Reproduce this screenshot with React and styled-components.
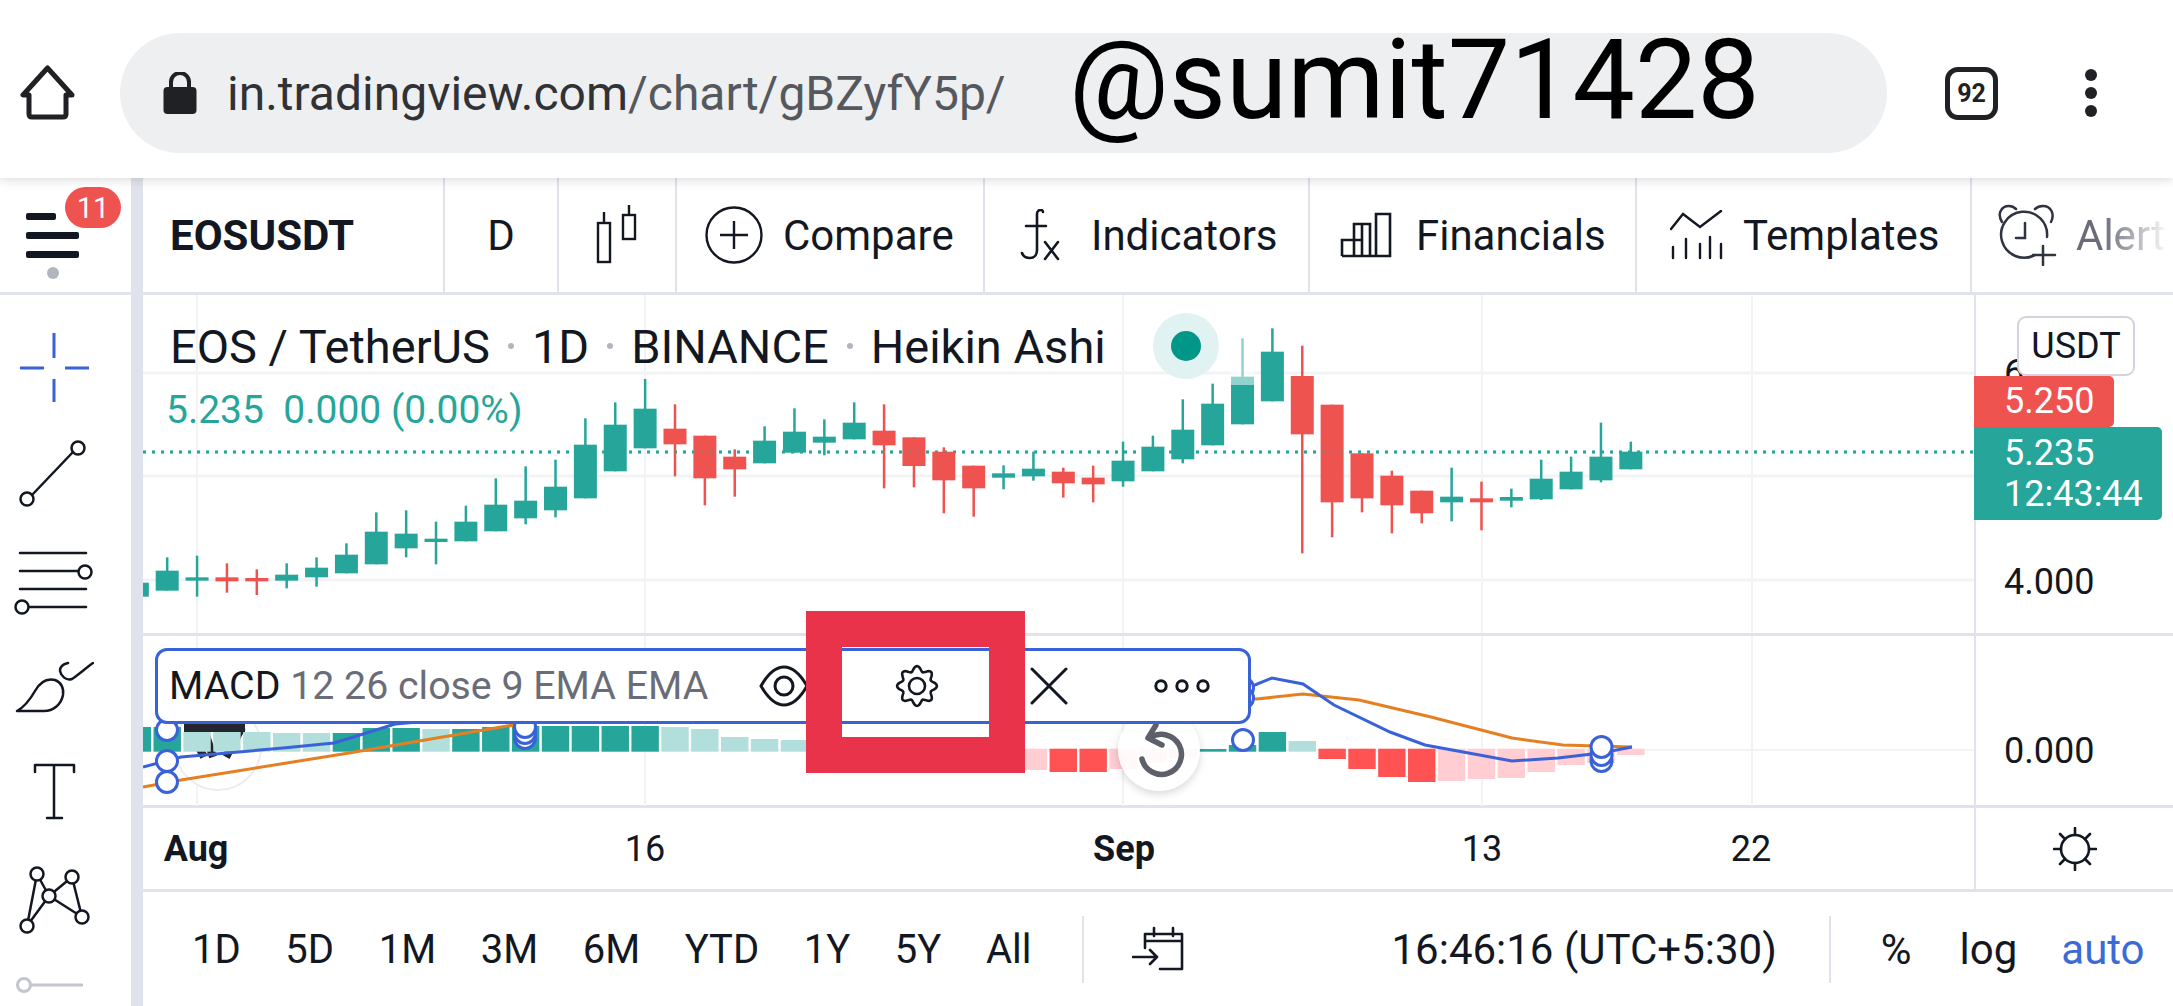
import React from 'react';
import styled, { createGlobalStyle } from 'styled-components';

const INK = '#131722';
const GREEN = '#26a69a';
const RED = '#ef5350';
const LINE = '#e0e3eb';
const GRID = '#f2f3f5';
const BLUE = '#3a62d8';

const GlobalStyle = createGlobalStyle`
  html, body { margin: 0; padding: 0; background: #fff; }
  body { font-family: Roboto, "Liberation Sans", sans-serif; color: ${INK}; overflow: hidden; }
`;

// wick top, body top, body bottom, wick bottom (read off the chart), colour
const candles = [
  [848, 848, 890, 890, 'g'], [772, 812, 872, 872, 'g'], [767, 832, 842, 890, 'g'], [790, 832, 844, 878, 'r'],
  [808, 834, 844, 885, 'r'], [790, 824, 842, 865, 'g'], [772, 803, 832, 860, 'g'], [730, 764, 820, 820, 'g'],
  [637, 695, 793, 793, 'g'], [631, 701, 745, 772, 'g'], [665, 716, 726, 793, 'g'], [617, 665, 724, 724, 'g'],
  [535, 614, 694, 694, 'g'], [499, 602, 655, 673, 'g'], [479, 560, 631, 652, 'g'], [355, 434, 595, 595, 'g'],
  [307, 374, 514, 514, 'g'], [237, 326, 445, 445, 'g'], [313, 386, 433, 529, 'r'], [407, 407, 535, 616, 'r'],
  [448, 470, 508, 590, 'r'], [379, 422, 490, 490, 'g'], [325, 395, 458, 458, 'g'], [358, 410, 428, 466, 'g'],
  [307, 368, 418, 418, 'g'], [313, 392, 436, 565, 'r'], [412, 412, 498, 562, 'r'], [442, 455, 541, 640, 'r'],
  [497, 497, 565, 650, 'r'], [496, 520, 533, 568, 'g'], [455, 506, 529, 542, 'g'], [503, 515, 550, 593, 'r'],
  [497, 533, 553, 607, 'r'], [425, 482, 544, 560, 'g'], [407, 440, 514, 514, 'g'], [298, 389, 478, 490, 'g'],
  [251, 311, 436, 436, 'g'], [115, 230, 373, 373, 'g'], [85, 155, 304, 304, 'g'], [137, 228, 403, 760, 'r'],
  [314, 314, 607, 712, 'r'], [460, 460, 595, 637, 'r'], [512, 527, 616, 700, 'r'], [572, 572, 640, 670, 'r'],
  [503, 590, 607, 664, 'g'], [545, 595, 607, 691, 'r'], [566, 591, 602, 622, 'g'], [479, 536, 598, 600, 'g'],
  [470, 515, 568, 568, 'g'], [368, 470, 541, 547, 'g'], [425, 455, 508, 508, 'g'],
];

const HIST_COLORS = { g: GREEN, l: '#b2dfdb', r: '#ff5252', p: '#ffcdd2' };
const ABOVE = [
  [-1, 727, 'g'], [0, 727, 'g'], [1, 732, 'l'], [2, 732, 'l'], [3, 732, 'l'], [4, 733, 'l'], [5, 733, 'l'], [6, 733, 'g'],
  [7, 728, 'g'], [8, 728, 'g'], [9, 729, 'l'], [10, 729, 'g'], [11, 727, 'g'], [12, 726, 'g'], [13, 726, 'g'],
  [14, 726, 'g'], [15, 726, 'g'], [16, 726, 'g'], [17, 727, 'l'], [18, 729, 'l'], [19, 737, 'l'], [20, 739, 'l'], [21, 740, 'l'],
  [35, 749, 'g'], [36, 745, 'g'], [37, 732, 'g'], [38, 741, 'l'],
];
const BELOW = [
  [29, 770, 'p'], [30, 772, 'r'], [31, 772, 'r'], [32, 769, 'p'], [33, 763, 'p'], [34, 758, 'p'], [39, 759, 'r'], [40, 769, 'r'],
  [41, 777, 'r'], [42, 782, 'r'], [43, 781, 'p'], [44, 779, 'p'], [45, 778, 'p'], [46, 772, 'p'], [47, 765, 'p'], [48, 763, 'p'], [49, 755, 'p'],
];

const GRID_X = [197, 645, 1123, 1482, 1752];
const TIME_TICKS = [
  { label: 'Aug', x: 196, bold: true }, { label: '16', x: 645 }, { label: 'Sep', x: 1124, bold: true },
  { label: '13', x: 1482 }, { label: '22', x: 1751 },
];
const RANGES = ['1D', '5D', '1M', '3M', '6M', 'YTD', '1Y', '5Y', 'All'];

const candleX = (i) => 167.2 + 29.87 * i;
const zy = (v) => 300 + v / 3;

const Page = styled.div`
  position: relative;
  width: 2173px;
  height: 1006px;
  overflow: hidden;
  background: #fff;
`;

/* browser chrome */
const BrowserBar = styled.header`
  position: relative;
  z-index: 3;
  height: 178px;
  box-sizing: border-box;
  padding-top: 8px;
  display: flex;
  align-items: center;
  background: #fff;
  box-shadow: 0 2px 10px rgba(0, 0, 0, 0.14);
`;
const HomeBtn = styled.div`
  width: 120px;
  padding-left: 20px;
  box-sizing: border-box;
  display: flex;
`;
const UrlPill = styled.div`
  width: 1767px;
  height: 120px;
  border-radius: 60px;
  background: #eeeff1;
  display: flex;
  align-items: center;
  padding-left: 43px;
  box-sizing: border-box;
  font-size: 48px;
  white-space: nowrap;
`;
const Domain = styled.span`
  color: #303236;
  margin-left: 30px;
`;
const UrlPath = styled.span`
  color: #55585d;
`;
const Watermark = styled.div`
  position: absolute;
  left: 1069px;
  top: 15px;
  font-size: 111px;
  line-height: 130px;
  color: #000;
`;
const TabCount = styled.div`
  width: 53px;
  height: 53px;
  margin-left: 58px;
  border: 5px solid #202124;
  border-radius: 13px;
  box-sizing: border-box;
  display: flex;
  align-items: center;
  justify-content: center;
  font-size: 25px;
  font-weight: 700;
  color: #202124;
`;
const Kebab = styled.div`
  margin-left: 87px;
  display: flex;
  flex-direction: column;
  gap: 6px;
  & > i {
    width: 12px;
    height: 12px;
    border-radius: 50%;
    background: #202124;
  }
`;

/* app frame */
const Body = styled.div`
  display: flex;
  height: 828px;
`;
const LeftCol = styled.aside`
  width: 131px;
  flex: none;
`;
const Divider = styled.div`
  width: 12px;
  flex: none;
  background: ${LINE};
`;
const Main = styled.div`
  flex: 1;
  min-width: 0;
`;
const MenuCell = styled.div`
  position: relative;
  height: 114px;
  border-bottom: 3px solid ${LINE};
`;
const MenuBars = styled.div`
  position: absolute;
  left: 26px;
  top: 35px;
  display: flex;
  flex-direction: column;
  gap: 12px;
`;
const MenuBar = styled.div`
  width: ${(p) => p.$w}px;
  height: 7px;
  border-radius: 2px;
  background: ${INK};
`;
const Badge = styled.div`
  position: absolute;
  left: 65px;
  top: 9px;
  width: 56px;
  height: 41px;
  border-radius: 21px;
  background: ${RED};
  box-shadow: 0 0 0 1px #fff;
  color: #fff;
  font-size: 29px;
  display: flex;
  align-items: center;
  justify-content: center;
`;
const MenuDot = styled.div`
  position: absolute;
  left: 47px;
  top: 89px;
  width: 12px;
  height: 12px;
  border-radius: 50%;
  background: #b2b5be;
`;
const ToolList = styled.div`
  padding: 20px 0 0 14px;
  display: flex;
  flex-direction: column;
`;
const ToolCell = styled.div`
  height: 106px;
  display: flex;
  align-items: center;
  flex: none;
`;

/* top toolbar */
const Toolbar = styled.nav`
  height: 114px;
  display: flex;
  border-bottom: 3px solid ${LINE};
  overflow: hidden;
`;
const ToolItem = styled.div`
  width: ${(p) => p.$w}px;
  flex: none;
  box-sizing: border-box;
  display: flex;
  align-items: center;
  justify-content: ${(p) => (p.$center ? 'center' : 'flex-start')};
  gap: ${(p) => p.$gap || 0}px;
  padding-left: ${(p) => p.$pad || 0}px;
  border-right: ${(p) => (p.$last ? 'none' : `2px solid ${LINE}`)};
  font-size: 42px;
  white-space: nowrap;
`;
const SymbolText = styled.span`
  font-size: 42px;
  font-weight: 700;
`;
const FadedText = styled.span`
  color: #6a6d78;
  -webkit-mask-image: linear-gradient(90deg, #000 30%, transparent 105%);
  mask-image: linear-gradient(90deg, #000 30%, transparent 105%);
`;

/* chart */
const ChartRow = styled.div`
  display: flex;
  height: ${(p) => p.$h}px;
  border-bottom: 3px solid ${LINE};
`;
const Pane = styled.div`
  position: relative;
  width: 1831px;
  flex: none;
`;
const Drawing = styled.svg`
  display: block;
`;
const PriceScale = styled.div`
  position: relative;
  flex: 1;
  border-left: 2px solid ${LINE};
`;
const ScaleText = styled.div`
  position: absolute;
  left: 28px;
  top: ${(p) => p.$y}px;
  transform: translateY(-50%);
  font-size: 36px;
  line-height: 44px;
`;
const CurrencyBox = styled.div`
  position: absolute;
  left: 41px;
  top: 21px;
  width: 118px;
  height: 60px;
  box-sizing: border-box;
  border: 2px solid #d1d4dc;
  border-radius: 9px;
  background: #fff;
  font-size: 36px;
  display: flex;
  align-items: center;
  justify-content: center;
`;
const PriceTag = styled.div`
  position: absolute;
  left: -2px;
  top: ${(p) => p.$top}px;
  width: ${(p) => p.$w}px;
  height: ${(p) => p.$h}px;
  box-sizing: border-box;
  padding-left: 30px;
  background: ${(p) => p.$bg};
  border-radius: 0 5px 5px 0;
  color: #fff;
  font-size: 36px;
  line-height: 41px;
  display: flex;
  flex-direction: column;
  justify-content: center;
`;
const TitleRow = styled.div`
  position: absolute;
  left: 27px;
  top: 18px;
  height: 66px;
  display: flex;
  align-items: center;
  gap: 18px;
  font-size: 47px;
  white-space: nowrap;
`;
const TitleDot = styled.i`
  width: 6px;
  height: 6px;
  border-radius: 50%;
  background: #b2b5be;
`;
const StatusHalo = styled.div`
  width: 66px;
  height: 66px;
  margin-left: 29px;
  border-radius: 50%;
  background: #e0f2f1;
  display: flex;
  align-items: center;
  justify-content: center;
  &::after {
    content: '';
    width: 30px;
    height: 30px;
    border-radius: 50%;
    background: #009688;
  }
`;
const ValueRow = styled.div`
  position: absolute;
  left: 23px;
  top: 91px;
  font-size: 39px;
  line-height: 48px;
  color: ${GREEN};
  white-space: pre;
`;
const IndicatorLegend = styled.div`
  position: absolute;
  left: 12px;
  top: 12px;
  width: 1096px;
  height: 76px;
  box-sizing: border-box;
  border: 3px solid ${BLUE};
  border-radius: 12px;
  background: #fff;
  display: flex;
  align-items: center;
  z-index: 2;
`;
const IndicatorText = styled.div`
  flex: 1;
  padding-left: 11px;
  font-size: 39.3px;
  white-space: nowrap;
  color: #6a6d78;
  & > b {
    font-weight: 400;
    color: ${INK};
  }
`;
const LegendSlot = styled.div`
  width: 132.5px;
  flex: none;
  display: flex;
  justify-content: center;
`;
const ResetBtn = styled.div`
  position: absolute;
  left: 975px;
  top: 73px;
  width: 82px;
  height: 82px;
  border-radius: 50%;
  background: rgba(255, 255, 255, 0.88);
  box-shadow: 0 3px 8px rgba(0, 0, 0, 0.16);
  display: flex;
  align-items: center;
  justify-content: center;
  z-index: 1;
`;
const TimeRow = styled.div`
  display: flex;
  height: 81px;
  border-bottom: 3px solid ${LINE};
`;
const TimeScale = styled.div`
  position: relative;
  width: 1831px;
  flex: none;
`;
const TimeTick = styled.div`
  position: absolute;
  left: ${(p) => p.$x}px;
  top: 50%;
  transform: translate(-50%, -50%);
  font-size: 36px;
  font-weight: ${(p) => (p.$bold ? 700 : 400)};
`;
const TimeCorner = styled.div`
  flex: 1;
  border-left: 2px solid ${LINE};
  display: flex;
  align-items: center;
  justify-content: center;
`;

/* bottom bar */
const BottomBar = styled.footer`
  height: 114px;
  display: flex;
  align-items: center;
  font-size: 40px;
  white-space: nowrap;
`;
const RangeGroup = styled.div`
  display: flex;
  gap: 44.6px;
  padding-left: 49px;
`;
const BarSep = styled.div`
  width: 2px;
  height: 67px;
  margin-left: ${(p) => p.$ml}px;
  background: ${LINE};
`;
const BarItem = styled.span`
  margin-left: ${(p) => p.$ml}px;
  font-size: 42px;
  color: ${(p) => p.$color || INK};
`;
const CalendarSlot = styled.div`
  margin-left: 48px;
  display: flex;
`;

const RedFrame = styled.div`
  position: absolute;
  left: 806px;
  top: 611px;
  width: 219px;
  height: 162px;
  box-sizing: border-box;
  border: 36px solid #e9334a;
  z-index: 4;
`;

/* icons */
const stroke = { fill: 'none', stroke: INK, strokeWidth: 2.5, strokeLinecap: 'round', strokeLinejoin: 'round' };

const HomeIcon = () => (
  <svg width="56" height="56" viewBox="0 0 56 56" fill="none" stroke="#202124" strokeWidth="5" strokeLinejoin="round">
    <path d="M27.5 3 L3 30 H9 V49 Q9 52 12 52 H43 Q46 52 46 49 V30 H52 Z" />
  </svg>
);
const LockIcon = () => (
  <svg width="34" height="42" viewBox="0 0 34 42">
    <rect x="0.5" y="15" width="33" height="27" rx="4" fill="#202124" />
    <path d="M8 17 V10 A9 9 0 0 1 26 10 V17" fill="none" stroke="#202124" strokeWidth="4" />
  </svg>
);
const CrosshairIcon = () => (
  <svg width="80" height="80" viewBox="0 0 80 80" stroke={BLUE} strokeWidth="3">
    <path d="M6 40 H30 M51 40 H75 M40 5 V30 M40 51 V74" fill="none" />
  </svg>
);
const TrendIcon = () => (
  <svg width="80" height="80" viewBox="0 0 80 80" {...stroke}>
    <path d="M18 61 L59 18" />
    <circle cx="13" cy="65" r="6.5" />
    <circle cx="64" cy="14" r="6.5" />
  </svg>
);
const FibIcon = () => (
  <svg width="80" height="80" viewBox="0 0 80 80" {...stroke}>
    <path d="M6 13 H72 M6 31 H64 M6 49 H72 M15 67 H72" />
    <circle cx="71" cy="32" r="6.5" />
    <circle cx="8" cy="67" r="6.5" />
  </svg>
);
const BrushIcon = () => (
  <svg width="80" height="80" viewBox="0 0 80 80" {...stroke}>
    <path d="M3 65 C12 60 17 52 21 45 C26 36 33 32 41 34 C47 36 50 42 49 49 C47 59 39 65 30 65 Z" />
    <path d="M54 17 C49 18 46 21 46 25 C47 30 52 35 58 33 C64 29 72 22 79 17" />
  </svg>
);
const TextIcon = () => (
  <svg width="80" height="80" viewBox="0 0 80 80" {...stroke}>
    <path d="M21 20 V13 H60 V20 M40 13 V66 M33 66 H48" />
  </svg>
);
const PatternIcon = () => (
  <svg width="80" height="80" viewBox="0 0 80 80" {...stroke}>
    <path d="M23 16 L13 68 M23 16 L35 38 M13 68 L35 38 M35 38 L58 19 M35 38 L68 59 M58 19 L68 59" />
    {[[23, 16], [58, 19], [35, 38], [68, 59], [13, 68]].map(([cx, cy]) => (
      <circle key={cx} cx={cx} cy={cy} r="6.5" fill="#fff" />
    ))}
  </svg>
);
const MeasureIcon = () => (
  <svg width="80" height="80" viewBox="0 0 80 80" fill="none" stroke="#c4c6cd" strokeWidth="3">
    <path d="M17 21 H69" />
    <circle cx="10" cy="21" r="6.5" />
  </svg>
);
const CandleIcon = () => (
  <svg width="44" height="62" viewBox="0 0 44 62" fill="none" stroke={INK} strokeWidth="2.4">
    <rect x="3" y="19" width="12" height="39" />
    <rect x="28" y="11" width="12" height="24" />
    <path d="M9 8 V19 M34 1 V11" />
  </svg>
);
const CompareIcon = () => (
  <svg width="58" height="58" viewBox="0 0 58 58" fill="none" stroke={INK} strokeWidth="2.4">
    <circle cx="29" cy="29" r="27.5" />
    <path d="M29 15 V43 M15 29 H43" />
  </svg>
);
const FxIcon = () => (
  <svg width="42" height="52" viewBox="0 0 42 52" fill="none" stroke={INK} strokeWidth="2.6" strokeLinecap="round">
    <path d="M19 5 C19 2 21 1 23 1 C24 1 25 2 25 3 M19 5 V41 C19 46 16 49 12 49 C8 49 5 47 4 44 M8 17 H28" />
    <path d="M27 33 L40 50 M40 33 L27 50" />
  </svg>
);
const BarsIcon = () => (
  <svg width="52" height="46" viewBox="0 0 52 46" fill="none" stroke={INK} strokeWidth="2.6">
    <path d="M2 44 H50 V2 H36 V44 M36 12 V44 M2 44 V28 H14 V44 M14 44 V12 H30 V44 M14 28 H22 M22 12 V44" />
  </svg>
);
const TemplatesIcon = () => (
  <svg width="54" height="50" viewBox="0 0 54 50" fill="none" stroke={INK} strokeWidth="2.4" strokeLinecap="round">
    <path d="M1 19 L13 4 L30 17 L51 1" />
    <path d="M3 48 V37 M16 48 V29 M30 48 V34 M40 48 V27 M51 48 V34" />
  </svg>
);
const AlertIcon = () => (
  <svg width="60" height="62" viewBox="0 0 60 62" fill="none" stroke="#303340" strokeWidth="2.5" strokeLinecap="round">
    <path d="M38 51 A23 23 0 1 1 50 33" />
    <path d="M5 18 C0 10 4 2 12 2 C15 2 17 3 19 5 M38 5 C40 3 43 2 46 2 C54 2 58 10 54 18" />
    <path d="M28 19 V34 H19 M46 42 V61 M36 51 H58" />
  </svg>
);
const EyeIcon = () => (
  <svg width="50" height="42" viewBox="0 0 50 42" fill="none" stroke={INK} strokeWidth="3">
    <path d="M2 21 C10 7 17 2 25 2 C33 2 40 7 48 21 C40 35 33 40 25 40 C17 40 10 35 2 21 Z" />
    <circle cx="25" cy="21" r="9" />
  </svg>
);
const GearIcon = () => {
  // wavy outline with eight lobes, as on the legend's settings button
  const pts = Array.from({ length: 120 }, (_, n) => {
    const a = (n / 120) * Math.PI * 2;
    const r = 17.4 + 2.5 * Math.cos(8 * a);
    return `${(22 + r * Math.sin(a)).toFixed(2)} ${(22 - r * Math.cos(a)).toFixed(2)}`;
  });
  return (
    <svg width="44" height="44" viewBox="0 0 44 44" fill="none" stroke={INK} strokeWidth="2.6">
      <path d={`M${pts.join(' L')} Z`} />
      <circle cx="22" cy="22" r="8" />
    </svg>
  );
};
const CloseIcon = () => (
  <svg width="38" height="38" viewBox="0 0 38 38" fill="none" stroke={INK} strokeWidth="3" strokeLinecap="round">
    <path d="M2 2 L36 36 M36 2 L2 36" />
  </svg>
);
const MoreIcon = () => (
  <svg width="56" height="16" viewBox="0 0 56 16" fill="none" stroke={INK} strokeWidth="3">
    <circle cx="7" cy="8" r="5.2" />
    <circle cx="28" cy="8" r="5.2" />
    <circle cx="49" cy="8" r="5.2" />
  </svg>
);
const ResetIcon = () => (
  <svg width="56" height="56" viewBox="0 0 56 56" fill="none" stroke="#5d606b" strokeWidth="5.5" strokeLinecap="round" strokeLinejoin="round">
    <path d="M19 16 A20 20 0 1 1 11 37" />
    <path d="M25 3 L17 16 L31 23" />
  </svg>
);
const SunIcon = () => (
  <svg width="44" height="44" viewBox="0 0 44 44" fill="none" stroke={INK} strokeWidth="2.6" strokeLinecap="round">
    <circle cx="22" cy="22" r="14" />
    <path d="M22 1 V8 M22 36 V43 M1 22 H8 M36 22 H43 M7 7 L12 12 M32 32 L37 37 M37 7 L32 12 M12 32 L7 37" />
  </svg>
);
const CalendarIcon = () => (
  <svg width="52" height="46" viewBox="0 0 52 46" fill="none" stroke={INK} strokeWidth="2.6" strokeLinecap="round" strokeLinejoin="round">
    <path d="M13 22 V8 H50 V43 H28 M13 15 H50 M22 2 V10 M41 2 V10" />
    <path d="M1 31 H25 M18 24 L25 31 L18 38" />
  </svg>
);

const PriceChart = () => (
  <Drawing width="1831" height="338" viewBox="143 295 1831 338">
    {GRID_X.map((x) => <line key={x} x1={x} x2={x} y1="295" y2="633" stroke={GRID} strokeWidth="2" />)}
    {[373, 476, 580].map((y) => <line key={y} x1="143" x2="1974" y1={y} y2={y} stroke={GRID} strokeWidth="3" />)}
    <line x1="143" x2="1974" y1="452" y2="452" stroke={GREEN} strokeWidth="3" strokeDasharray="3 6" />
    {candles.map(([wt, bt, bb, wb, c], n) => {
      const x = candleX(n - 1);
      const color = c === 'g' ? GREEN : RED;
      return (
        <g key={n} fill={color}>
          <rect x={x - 1.25} y={zy(wt)} width="2.5" height={(wb - wt) / 3} />
          <rect x={x - 11.5} y={zy(bt)} width="23" height={(bb - bt) / 3} />
        </g>
      );
    })}
    <line x1="143" x2="1974" y1="452" y2="452" stroke={GREEN} strokeWidth="3" strokeDasharray="3 6" opacity="0.25" />
    <rect x="1230" y="336" width="24" height="49" fill="#fff" opacity="0.5" />
  </Drawing>
);

const Handle = ({ x, y }) => <circle cx={x} cy={y} r="10.5" fill="#fff" stroke={BLUE} strokeWidth="3" />;

const MacdChart = () => (
  <Drawing width="1831" height="170" viewBox="143 636 1831 170">
    {GRID_X.map((x) => <line key={x} x1={x} x2={x} y1="636" y2="806" stroke={GRID} strokeWidth="2" />)}
    <line x1="143" x2="1974" y1="750" y2="750" stroke={GRID} strokeWidth="2" />
    <circle cx="218" cy="747" r="43" fill="#fff" stroke="#ececec" strokeWidth="2" />
    <path d="M184 728 H245 M242 727 L226 757 M205 732 L213 757 M190 730 L204 757" fill="none" stroke="#23262e" strokeWidth="8" />
    {ABOVE.map(([i, top, c]) => (
      <rect key={i} x={candleX(i) - 13.7} y={top} width="27.4" height={751.7 - top} fill={HIST_COLORS[c]} />
    ))}
    {BELOW.map(([i, bottom, c]) => (
      <rect key={i} x={candleX(i) - 13.7} y="748.7" width="27.4" height={bottom - 748.7} fill={HIST_COLORS[c]} />
    ))}
    <polyline
      fill="none" stroke="#e67e22" strokeWidth="3"
      points="143,787 181,780 349,753 507,726 800,690 1257,699 1303,694 1359,700 1431,717 1512,738 1563,745 1632,747"
    />
    <polyline
      fill="none" stroke={BLUE} strokeWidth="3"
      points="143,767 181,757 283,748 334,743 360,735 395,724 800,690 1255,685 1272,678 1303,684 1334,705 1390,732 1425,745 1512,761 1558,758 1601,753 1632,747"
    />
    <Handle x={167} y={730} />
    <Handle x={167} y={761} />
    <Handle x={167} y={782} />
    <Handle x={525} y={738} />
    <Handle x={525} y={733} />
    <Handle x={525} y={727} />
    <Handle x={1243} y={688} />
    <Handle x={1243} y={698} />
    <Handle x={1243} y={740} />
    <Handle x={1601.5} y={761} />
    <Handle x={1601.5} y={755} />
    <Handle x={1601.5} y={747} />
  </Drawing>
);

export default function App() {
  return (
    <Page>
      <GlobalStyle />
      <BrowserBar>
        <HomeBtn><HomeIcon /></HomeBtn>
        <UrlPill>
          <LockIcon />
          <Domain>in.tradingview.com</Domain>
          <UrlPath>/chart/gBZyfY5p/</UrlPath>
        </UrlPill>
        <TabCount>92</TabCount>
        <Kebab><i /><i /><i /></Kebab>
        <Watermark>@sumit71428</Watermark>
      </BrowserBar>

      <Body>
        <LeftCol>
          <MenuCell>
            <MenuBars>
              <MenuBar $w={30} />
              <MenuBar $w={53} />
              <MenuBar $w={53} />
            </MenuBars>
            <Badge>11</Badge>
            <MenuDot />
          </MenuCell>
          <ToolList>
            <ToolCell><CrosshairIcon /></ToolCell>
            <ToolCell><TrendIcon /></ToolCell>
            <ToolCell><FibIcon /></ToolCell>
            <ToolCell><BrushIcon /></ToolCell>
            <ToolCell><TextIcon /></ToolCell>
            <ToolCell><PatternIcon /></ToolCell>
            <ToolCell><MeasureIcon /></ToolCell>
          </ToolList>
        </LeftCol>
        <Divider />
        <Main>
          <Toolbar>
            <ToolItem $w={302} $pad={27}><SymbolText>EOSUSDT</SymbolText></ToolItem>
            <ToolItem $w={114} $center>D</ToolItem>
            <ToolItem $w={118} $center><CandleIcon /></ToolItem>
            <ToolItem $w={308} $pad={28} $gap={20}><CompareIcon />Compare</ToolItem>
            <ToolItem $w={325} $pad={33} $gap={31}><FxIcon />Indicators</ToolItem>
            <ToolItem $w={327} $pad={30} $gap={24}><BarsIcon />Financials</ToolItem>
            <ToolItem $w={335} $pad={33} $gap={19}><TemplatesIcon />Templates</ToolItem>
            <ToolItem $w={202} $pad={25} $gap={19} $last><AlertIcon /><FadedText>Alert</FadedText></ToolItem>
          </Toolbar>

          <ChartRow $h={338}>
            <Pane>
              <PriceChart />
              <TitleRow>
                <span>EOS / TetherUS</span>
                <TitleDot />
                <span>1D</span>
                <TitleDot />
                <span>BINANCE</span>
                <TitleDot />
                <span>Heikin Ashi</span>
                <StatusHalo />
              </TitleRow>
              <ValueRow>{'5.235  0.000 (0.00%)'}</ValueRow>
            </Pane>
            <PriceScale>
              <ScaleText $y={78}>6.000</ScaleText>
              <ScaleText $y={287}>4.000</ScaleText>
              <CurrencyBox>USDT</CurrencyBox>
              <PriceTag $top={81} $w={140} $h={51} $bg={RED}>5.250</PriceTag>
              <PriceTag $top={132} $w={188} $h={93} $bg={GREEN}>
                <span>5.235</span>
                <span>12:43:44</span>
              </PriceTag>
            </PriceScale>
          </ChartRow>

          <ChartRow $h={169}>
            <Pane>
              <MacdChart />
              <IndicatorLegend>
                <IndicatorText><b>MACD</b> 12 26 close 9 EMA EMA</IndicatorText>
                <LegendSlot><EyeIcon /></LegendSlot>
                <LegendSlot><GearIcon /></LegendSlot>
                <LegendSlot><CloseIcon /></LegendSlot>
                <LegendSlot><MoreIcon /></LegendSlot>
              </IndicatorLegend>
              <ResetBtn><ResetIcon /></ResetBtn>
            </Pane>
            <PriceScale>
              <ScaleText $y={115}>0.000</ScaleText>
            </PriceScale>
          </ChartRow>

          <TimeRow>
            <TimeScale>
              {TIME_TICKS.map((t) => (
                <TimeTick key={t.label} $x={t.x - 143} $bold={t.bold}>{t.label}</TimeTick>
              ))}
            </TimeScale>
            <TimeCorner><SunIcon /></TimeCorner>
          </TimeRow>

          <BottomBar>
            <RangeGroup>
              {RANGES.map((r) => <span key={r}>{r}</span>)}
            </RangeGroup>
            <BarSep $ml={50} />
            <CalendarSlot><CalendarIcon /></CalendarSlot>
            <BarItem $ml={208}>16:46:16 (UTC+5:30)</BarItem>
            <BarSep $ml={52} />
            <BarItem $ml={50}>%</BarItem>
            <BarItem $ml={48}>log</BarItem>
            <BarItem $ml={44} $color="#3b6bd6">auto</BarItem>
          </BottomBar>
        </Main>
      </Body>
      <RedFrame />
    </Page>
  );
}
